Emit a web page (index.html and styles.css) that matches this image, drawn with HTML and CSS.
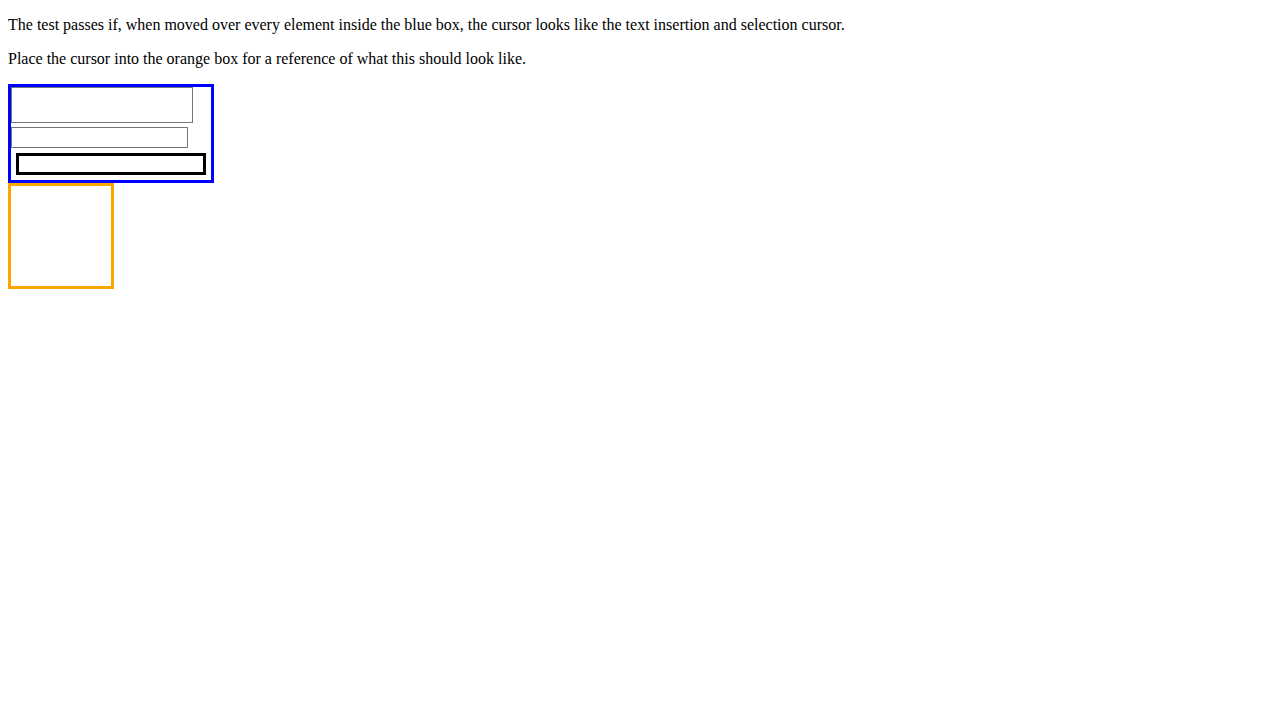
FILE: index.html
```html
<!DOCTYPE html>
<html>
<head>
<meta charset="utf-8">
<link rel="stylesheet" href="styles.css">
</head>
<body>
<p class="line">The test passes if, when moved over every element inside the blue box, the cursor looks like the text insertion and selection cursor.</p>
<p class="line">Place the cursor into the orange box for a reference of what this should look like.</p>
<div class="test-box">
  <textarea class="area"></textarea>
  <input class="field" type="text">
  <div class="inner"></div>
</div>
<div class="ref-box"></div>
</body>
</html>
```
FILE: styles.css
```css
body {
  margin: 0 8px 8px 8px;
  font-family: "Liberation Serif", "Times New Roman", serif;
  font-size: 16px;
  color: #000;
  background: #fff;
}
.line {
  margin: 16px 0;
  line-height: 18px;
}
.test-box {
  width: 200px;
  height: 93px;
  border: 3px solid blue;
  display: flex;
  flex-direction: column;
  align-items: flex-start;
  cursor: text;
}
.area {
  box-sizing: border-box;
  width: 182px;
  height: 36px;
  margin: 0;
  padding: 2px;
  border: 1px solid #767676;
  resize: none;
  cursor: text;
}
.field {
  box-sizing: border-box;
  width: 177px;
  height: 21px;
  margin: 4px 0 0 0;
  padding: 1px 2px;
  border: 1px solid #767676;
  cursor: text;
}
.inner {
  box-sizing: border-box;
  align-self: stretch;
  height: 22px;
  margin: 5px 5px 0 5px;
  border: 3px solid #000;
}
.ref-box {
  width: 100px;
  height: 100px;
  border: 3px solid orange;
  cursor: text;
}
```
